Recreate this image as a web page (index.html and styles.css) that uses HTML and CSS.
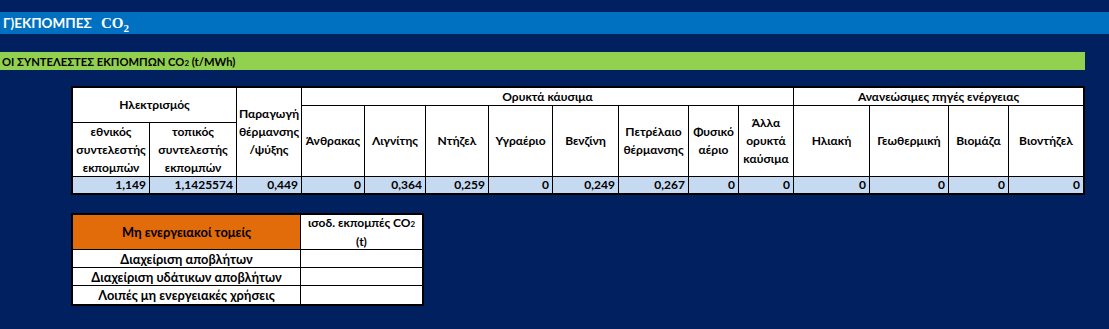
FILE: index.html
```html
<!DOCTYPE html>
<html lang="el">
<head>
<meta charset="utf-8">
<link rel="stylesheet" href="styles.css">
</head>
<body>
<div class="page">
  <div class="title"><span>Γ)ΕΚΠΟΜΠΕΣ <span class="co">CO<sub>2</sub></span></span></div>
  <div class="subtitle"><span>ΟΙ ΣΥΝΤΕΛΕΣΤΕΣ ΕΚΠΟΜΠΩΝ CO<span class="s2">2</span> (t/MWh)</span></div>

  <div class="grid main">
    <div class="c h" style="grid-column:1/3;grid-row:1/3"><span>Ηλεκτρισμός</span></div>
    <div class="c h" style="grid-column:1;grid-row:3"><span>εθνικός<br>συντελεστής<br>εκπομπών</span></div>
    <div class="c h" style="grid-column:2;grid-row:3"><span>τοπικός<br>συντελεστής<br>εκπομπών</span></div>
    <div class="c h" style="grid-column:3;grid-row:1/4"><span>Παραγωγή<br>θέρμανσης<br>/ψύξης</span></div>
    <div class="c h" style="grid-column:4/12;grid-row:1"><span>Ορυκτά κάυσιμα</span></div>
    <div class="c h" style="grid-column:12/16;grid-row:1"><span>Ανανεώσιμες πηγές ενέργειας</span></div>
    <div class="c h" style="grid-column:4;grid-row:2/4"><span>Άνθρακας</span></div>
    <div class="c h" style="grid-column:5;grid-row:2/4"><span>Λιγνίτης</span></div>
    <div class="c h" style="grid-column:6;grid-row:2/4"><span>Ντήζελ</span></div>
    <div class="c h" style="grid-column:7;grid-row:2/4"><span>Υγραέριο</span></div>
    <div class="c h" style="grid-column:8;grid-row:2/4"><span>Βενζίνη</span></div>
    <div class="c h" style="grid-column:9;grid-row:2/4"><span>Πετρέλαιο<br>θέρμανσης</span></div>
    <div class="c h" style="grid-column:10;grid-row:2/4"><span>Φυσικό<br>αέριο</span></div>
    <div class="c h" style="grid-column:11;grid-row:2/4"><span>Άλλα<br>ορυκτά<br>καύσιμα</span></div>
    <div class="c h" style="grid-column:12;grid-row:2/4"><span>Ηλιακή</span></div>
    <div class="c h" style="grid-column:13;grid-row:2/4"><span>Γεωθερμική</span></div>
    <div class="c h" style="grid-column:14;grid-row:2/4"><span>Βιομάζα</span></div>
    <div class="c h" style="grid-column:15;grid-row:2/4"><span>Βιοντήζελ</span></div>
    <div class="c v">1,149</div>
    <div class="c v">1,1425574</div>
    <div class="c v">0,449</div>
    <div class="c v">0</div>
    <div class="c v">0,364</div>
    <div class="c v">0,259</div>
    <div class="c v">0</div>
    <div class="c v">0,249</div>
    <div class="c v">0,267</div>
    <div class="c v">0</div>
    <div class="c v">0</div>
    <div class="c v">0</div>
    <div class="c v">0</div>
    <div class="c v">0</div>
    <div class="c v">0</div>
  </div>

  <div class="grid second">
    <div class="c h orange lbl"><span>Μη ενεργειακοί τομείς</span></div>
    <div class="c h"><span>ισοδ. εκπομπές CO<span class="s2">2</span><br>(t)</span></div>
    <div class="c h lbl"><span>Διαχείριση αποβλήτων</span></div>
    <div class="c"></div>
    <div class="c h lbl"><span>Διαχείριση υδάτικων αποβλήτων</span></div>
    <div class="c"></div>
    <div class="c h lbl"><span>Λοιπές μη ενεργειακές χρήσεις</span></div>
    <div class="c"></div>
  </div>
</div>
</body>
</html>
```
FILE: styles.css
```css
html, body {
  margin: 0;
  padding: 0;
  background: #002060;
}
body {
  font-family: Lato, "Noto Sans", sans-serif;
  font-size: 12px;
  font-weight: bold;
  color: #000;
}
.page {
  padding-top: 12px;
  width: 1109px;
  height: 317px;
  overflow: hidden;
}
.title {
  height: 22px;
  background: #0070C0;
  color: #fff;
  font-size: 13.5px;
  display: flex;
  align-items: center;
  padding-left: 3px;
  white-space: pre;
}
.title .co {
  font-family: "Liberation Serif", serif;
  font-size: 15px;
  font-weight: bold;
  margin-left: 6px;
}
.title sub {
  font-size: 11px;
  vertical-align: -4px;
  line-height: 0;
}
.subtitle {
  margin-top: 18px;
  height: 18px;
  width: 1085px;
  background: #92D050;
  display: flex;
  align-items: center;
  padding-left: 2px;
  box-sizing: border-box;
  font-size: 11.2px;
}
.s2 {
  font-size: 8px;
}
.grid {
  display: grid;
  background: #000;
  gap: 1px;
  padding: 2px;
  margin-left: 71px;
  width: max-content;
}
.main {
  margin-top: 16px;
  grid-template-columns: 76px 86px 64px 62px 60px 62px 63px 65px 69px 49px 54px 75px 78px 59px 74px;
  grid-template-rows: 17px 16px 53px 16px;
}
.second {
  margin-top: 18px;
  grid-template-columns: 227px 121px;
  grid-template-rows: 34px 17px 17px 18px;
}
.c {
  background: #fff;
  line-height: 18px;
}
.h {
  display: flex;
  align-items: center;
  justify-content: center;
  text-align: center;
}
.lbl {
  font-size: 12.8px;
}
.v {
  background: #C5D9F1;
  text-align: right;
  padding-right: 3px;
  line-height: 16px;
}
.orange {
  background: #E26B0A;
}
```
